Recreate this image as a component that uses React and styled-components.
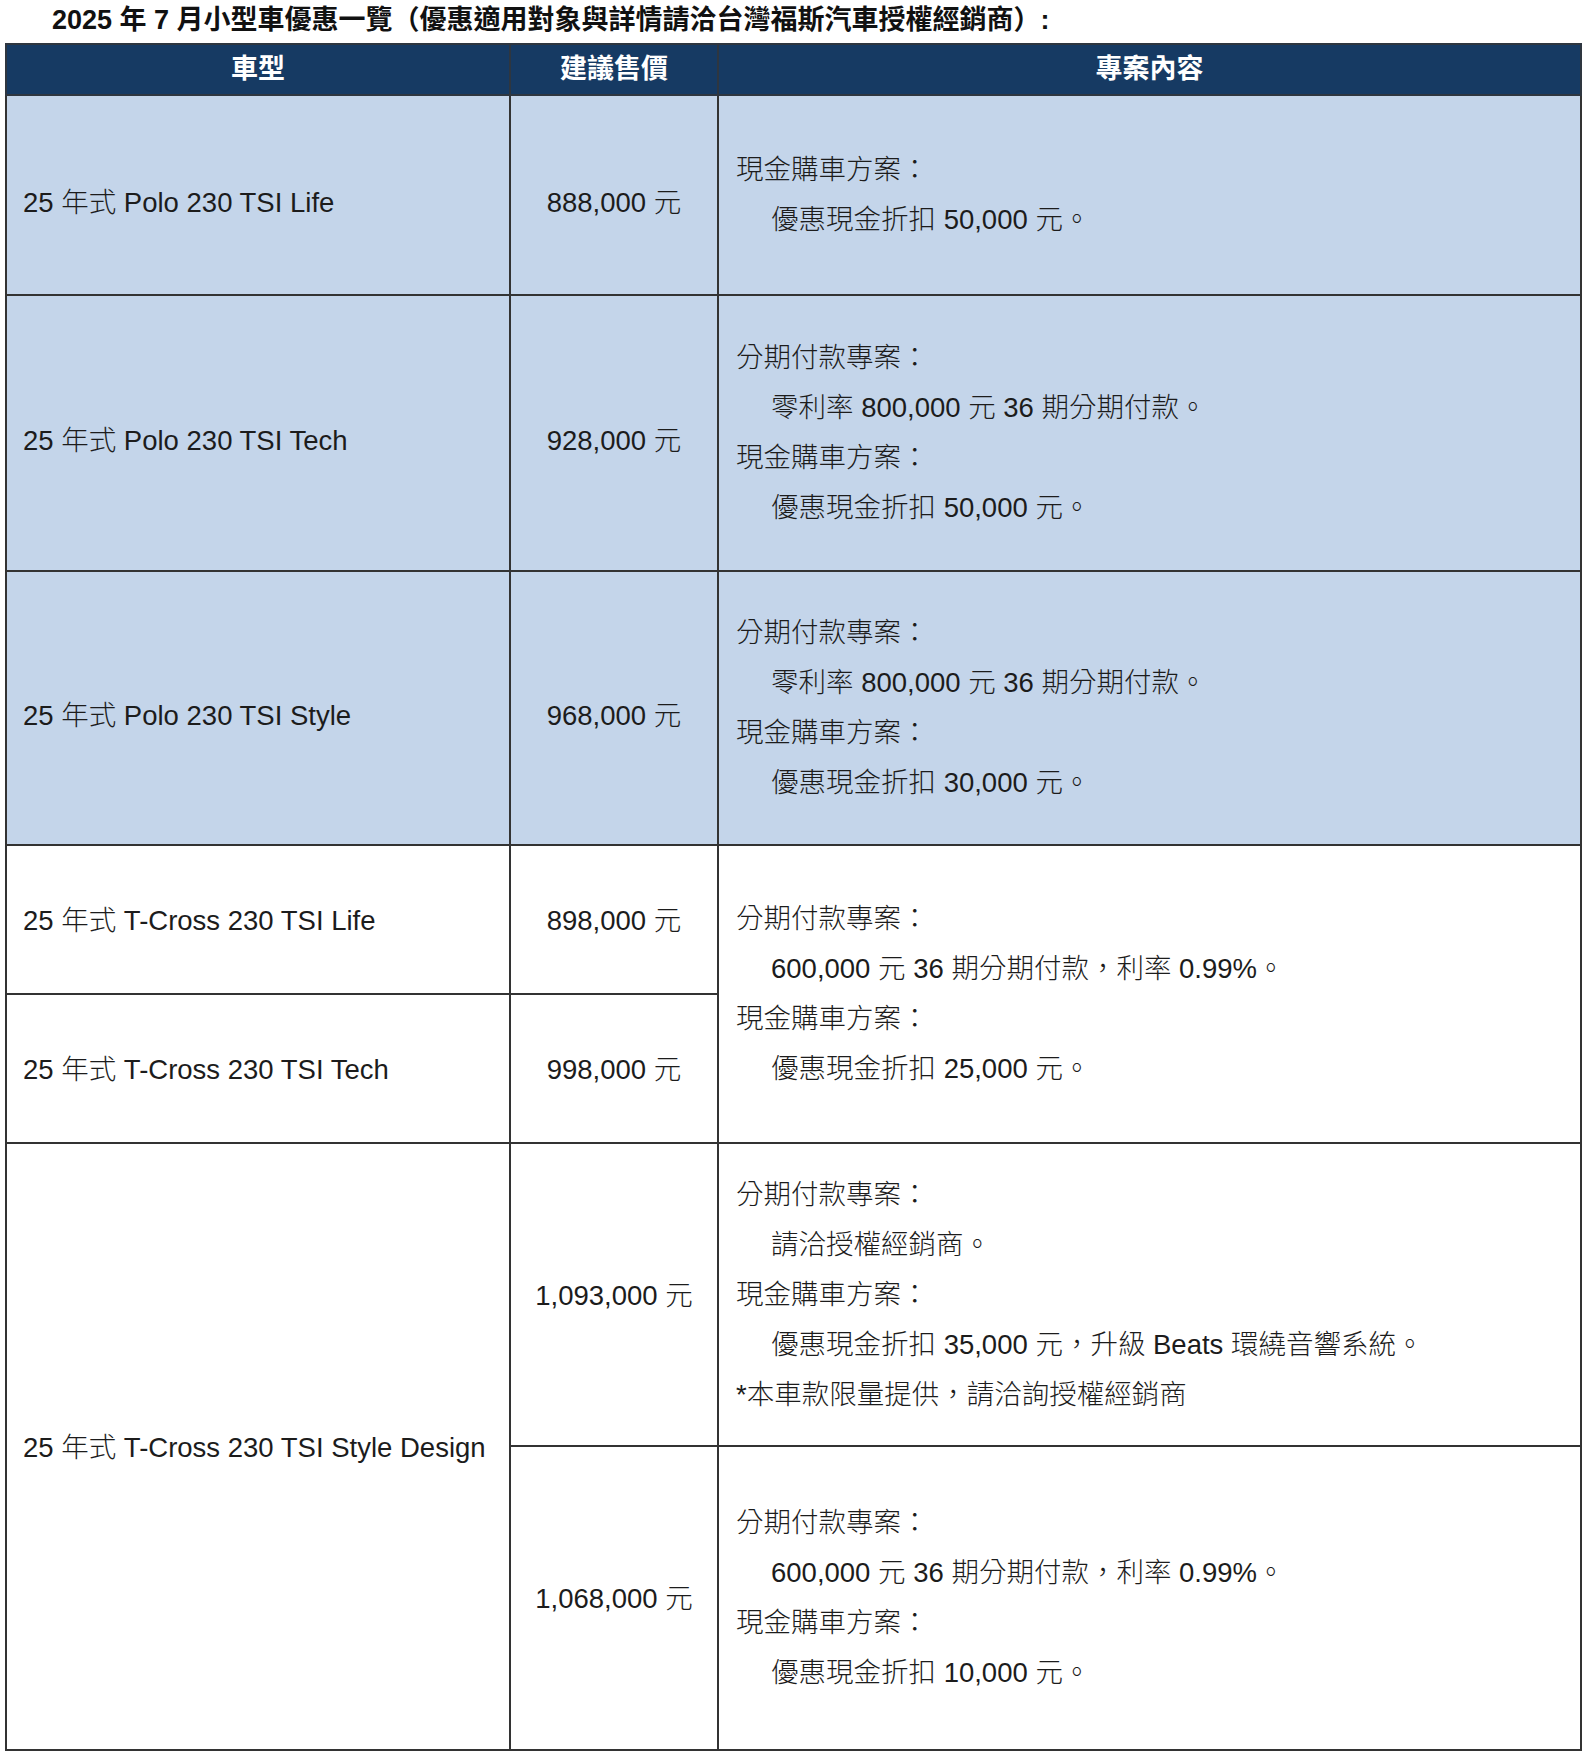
import React from 'react';
import styled, { createGlobalStyle } from 'styled-components';

const GlobalStyle = createGlobalStyle`
  html, body {
    margin: 0;
    padding: 0;
    background: #ffffff;
  }
  body {
    font-family: "Liberation Sans", Arial, "Noto Sans CJK TC", sans-serif;
    color: #1c1c1c;
  }
`;

const Page = styled.div`
  width: 1588px;
  padding: 0 8px 0 5px;
  box-sizing: border-box;
`;

const Title = styled.h1`
  margin: 0;
  padding-left: 47px;
  height: 43px;
  line-height: 41px;
  font-size: 27px;
  font-weight: 700;
  color: #111;
  white-space: nowrap;
`;

const Table = styled.table`
  width: 1575px;
  border-collapse: collapse;
  table-layout: fixed;
  border: 2px solid #5a5a5a;
`;

const HeadRow = styled.tr`
  height: 51px;
  background: #163a63;
`;

const HeadCell = styled.th`
  border: 2px solid #2e3640;
  color: #ffffff;
  font-size: 27px;
  font-weight: 700;
  text-align: center;
  vertical-align: middle;
  padding: 0 0 7px 0;
`;

const Row = styled.tr`
  height: ${p => p.$h}px;
  background: ${p => (p.$blue ? '#c4d5ea' : '#ffffff')};
`;

const ModelCell = styled.td`
  border: 2px solid #333;
  padding: ${p => (p.$drop ? '10px 10px 0 16px' : '0 10px 4px 16px')};
  font-size: 27.5px;
  font-weight: 300;
  vertical-align: middle;
  white-space: nowrap;
`;

const PriceCell = styled.td`
  border: 2px solid #333;
  padding: ${p => (p.$drop ? '10px 0 0 0' : '0 0 4px 0')};
  font-size: 27.5px;
  font-weight: 300;
  text-align: center;
  vertical-align: middle;
  white-space: nowrap;
`;

const PlanCell = styled.td`
  border: 2px solid #333;
  padding: 0 10px 0 17px;
  vertical-align: middle;
`;

const Line = styled.div`
  font-size: 27.5px;
  font-weight: 300;
  line-height: 50px;
  white-space: nowrap;
  padding-left: ${p => (p.$indent ? '35px' : '0')};
`;

const plans = {
  cash50: [
    ['現金購車方案：', false],
    ['優惠現金折扣 50,000 元。', true],
  ],
  zero50: [
    ['分期付款專案：', false],
    ['零利率 800,000 元 36 期分期付款。', true],
    ['現金購車方案：', false],
    ['優惠現金折扣 50,000 元。', true],
  ],
  zero30: [
    ['分期付款專案：', false],
    ['零利率 800,000 元 36 期分期付款。', true],
    ['現金購車方案：', false],
    ['優惠現金折扣 30,000 元。', true],
  ],
  rate25: [
    ['分期付款專案：', false],
    ['600,000 元 36 期分期付款，利率 0.99%。', true],
    ['現金購車方案：', false],
    ['優惠現金折扣 25,000 元。', true],
  ],
  beats: [
    ['分期付款專案：', false],
    ['請洽授權經銷商。', true],
    ['現金購車方案：', false],
    ['優惠現金折扣 35,000 元，升級 Beats 環繞音響系統。', true],
    ['*本車款限量提供，請洽詢授權經銷商', false],
  ],
  rate10: [
    ['分期付款專案：', false],
    ['600,000 元 36 期分期付款，利率 0.99%。', true],
    ['現金購車方案：', false],
    ['優惠現金折扣 10,000 元。', true],
  ],
};

const Plan = ({ lines, rowSpan }) => (
  <PlanCell rowSpan={rowSpan}>
    {lines.map(([text, indent], i) => (
      <Line key={i} $indent={indent}>{text}</Line>
    ))}
  </PlanCell>
);

const App = () => (
  <Page>
    <GlobalStyle />
    <Title>2025 年 7 月小型車優惠一覽（優惠適用對象與詳情請洽台灣福斯汽車授權經銷商）:</Title>
    <Table>
      <colgroup>
        <col style={{ width: 504 }} />
        <col style={{ width: 208 }} />
        <col style={{ width: 863 }} />
      </colgroup>
      <thead>
        <HeadRow>
          <HeadCell>車型</HeadCell>
          <HeadCell>建議售價</HeadCell>
          <HeadCell>專案內容</HeadCell>
        </HeadRow>
      </thead>
      <tbody>
        <Row $h={200} $blue>
          <ModelCell $drop>25 年式 Polo 230 TSI Life</ModelCell>
          <PriceCell $drop>888,000 元</PriceCell>
          <Plan lines={plans.cash50} />
        </Row>
        <Row $h={276} $blue>
          <ModelCell $drop>25 年式 Polo 230 TSI Tech</ModelCell>
          <PriceCell $drop>928,000 元</PriceCell>
          <Plan lines={plans.zero50} />
        </Row>
        <Row $h={274} $blue>
          <ModelCell $drop>25 年式 Polo 230 TSI Style</ModelCell>
          <PriceCell $drop>968,000 元</PriceCell>
          <Plan lines={plans.zero30} />
        </Row>
        <Row $h={149}>
          <ModelCell>25 年式 T-Cross 230 TSI Life</ModelCell>
          <PriceCell>898,000 元</PriceCell>
          <Plan lines={plans.rate25} rowSpan={2} />
        </Row>
        <Row $h={149}>
          <ModelCell>25 年式 T-Cross 230 TSI Tech</ModelCell>
          <PriceCell>998,000 元</PriceCell>
        </Row>
        <Row $h={303}>
          <ModelCell rowSpan={2}>25 年式 T-Cross 230 TSI Style Design</ModelCell>
          <PriceCell>1,093,000 元</PriceCell>
          <Plan lines={plans.beats} />
        </Row>
        <Row $h={304}>
          <PriceCell>1,068,000 元</PriceCell>
          <Plan lines={plans.rate10} />
        </Row>
      </tbody>
    </Table>
  </Page>
);

export default App;
